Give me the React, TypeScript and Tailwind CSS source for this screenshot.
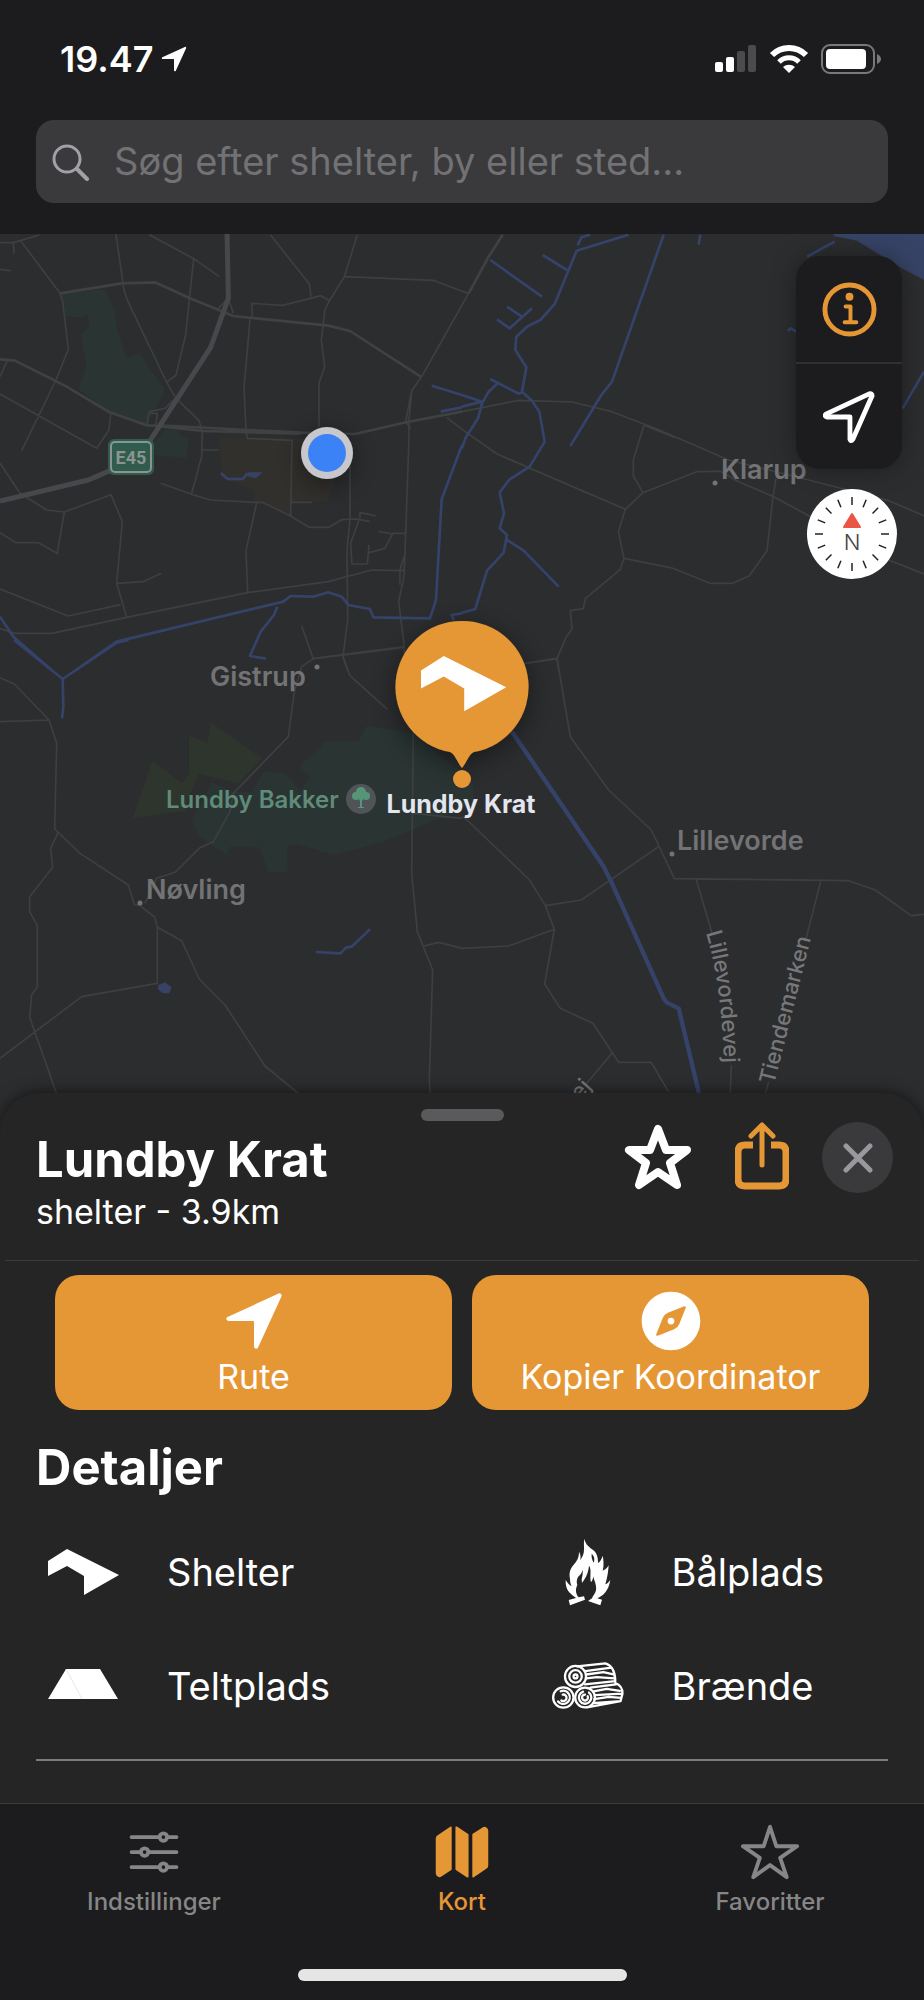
import { useState } from "react";
import {
  IoCompass,
  IoMap,
  IoNavigate,
  IoOptionsOutline,
  IoStarOutline,
} from "react-icons/io5";

// Map geometry is stored per tile, in tile units (3 units = 1 map pixel).
type Tile = {
  x: number;
  y: number;
  parks?: string;
  woods?: string;
  campus?: string;
  lakes?: string;
  roads: string;
  mainRoads?: string;
  motorway?: string;
  streams: string;
  canal?: string;
};

const tiles: Tile[] = [
  {
    x: 0,
    y: -4,
    parks:
      "M183 190L315 177L343 240L352 300L380 385L418 370L495 480L440 585L325 545L235 478L260 410L243 315L268 288L262 252L250 262L197 260Z M495 600L535 600L538 615L567 628L558 685L465 675L460 640Z",
    campus:
      "M660 625H876L920 628L1010 745L980 817H872L870 857L790 818L763 815V780L663 745Z",
    lakes: "M735 735L745 727H787L768 745L742 738Z",
    motorway: "M681 0L685 205L632 352L450 632M330 722L265 750L0 813",
    mainRoads:
      "M0 388L45 392L200 470L325 545L440 586L520 588L740 600L905 608L1065 612L1222 576L1386 545M470 588L610 603L900 611M180 190L365 160L465 157L570 205L700 258L985 287L1050 303L1262 440",
    roads:
      "M0 38L40 38L118 15M40 38L42 70M62 32L180 190L188 215L205 358L168 450L65 662M0 118L32 122M346 0L372 180L384 215L500 457L528 505L597 572L607 605L605 680L575 790M448 14L581 86L658 140M581 86L557 315L528 435L500 457M655 235L685 205L700 250M811 14L928 162L933 200M1072 14L1033 140L988 213L975 238L964 330L974 410L957 460V590M1033 140L1300 151L1386 184M757 262L755 220L848 226L963 197L990 213M750 268L732 475L738 600L742 625L876 631L872 857M1386 225L1265 440L1235 482L1227 570V625L1217 910L1212 1040L1196 1115L1213 1250V1320M1235 482L1217 575L1232 595M1340 562L1386 598M0 440L22 392M145 440L200 470M0 492L290 655L327 600L332 548M440 586L448 545L495 535L525 505M450 550H472L468 582M607 660H658M482 760L575 793L632 810L790 818L870 857L928 892H987L1025 869L1070 867L1110 875M875 817H936M770 818L738 962L743 1085M0 700L60 790L140 840L193 846L333 794L367 875L350 1060L380 1162M193 846L172 968M0 908L47 938H115L175 972M350 1060L430 1055L484 1030M0 1077L205 1158L362 1124M0 1196L45 1210H155L380 1162L743 1088L985 1055L1115 1020L1212 1022M1050 680V870L1041 960L1043 1170L1029 1280L1042 1320M1078 867L1052 940L1056 1002H1102L1107 945M1107 968L1155 955L1177 912L1135 904M1177 910H1217M1080 865V847L1127 858M905 1187L940 1286L1213 1250M1212 980L1200 1020V1065",
    streams:
      "M0 1160L40 1220L155 1320M228 1320L350 1235L850 1115L872 1098L940 1100L985 1087L1025 1100L1045 1125L1110 1137L1120 1162L1290 1165L1308 1110L1325 808L1386 645M832 1130L822 1155L782 1205L750 1278L798 1286M1295 467L1386 495M1322 545L1386 532M663 729L683 747H728L742 730M1386 1150L1355 1155L1362 1170",
  },
  {
    x: 462,
    y: -4,
    lakes: "M1115 0H1386V150L1320 115L1185 32L1115 18Z",
    mainRoads: "M122 14L80 80L20 190",
    roads:
      "M20 190L0 225M0 184L20 190M0 545L170 511L330 516L450 545L585 597L800 690L1040 750L1280 812L1386 857M545 585L640 623M0 598L105 672L490 838M545 588L514 690V738L543 788L490 838L469 905L486 985L475 1018L370 1106L364 1136L325 1142L330 1198L312 1222L285 1286L290 1320M285 1286L190 1300M543 788L704 725L775 724L830 755L935 800L1040 857L1280 990L1386 1032M942 745L933 800L915 962L862 1037L812 1060H745L630 1014L486 985",
    streams:
      "M385 14L358 22L347 46M500 14L344 62L278 222L235 270L195 290L163 320L160 360L193 412L180 485L210 512L232 545L248 635L203 710L143 748L113 787L126 850L113 895L135 915L125 968L75 1022L40 1137L0 1148M85 447L168 490L180 488M105 462L80 485L60 520L48 565L10 625L0 655M0 495L60 515L0 530M135 930L185 962L290 1070M605 14L450 455L418 495L325 648M715 14L710 44M242 75L315 120M85 90L240 200M135 230L180 260M105 268L143 295L210 235M1035 80L1118 35M978 302L986 295L1003 305M1386 425L1322 535",
  },
  {
    x: 0,
    y: 406,
    parks:
      "M897 380L978 304L1075 303L1100 257L1240 280L1386 400L1420 430V490L1240 568L1150 605L1005 645L890 612L862 618V695L805 698L778 622L693 618L680 645L600 592L573 540L605 490L632 425L700 455L755 455L790 395L855 400L900 450L932 410Z",
    woods:
      "M632 247L787 355L715 430L595 402L565 480L560 512L398 535L458 362L547 430L567 400V288L622 308Z",
    lakes: "M475 1035L495 1027L515 1042L508 1060H488L474 1048Z",
    roads:
      "M0 113L43 132L147 240L170 310L164 567L240 640L385 735L403 793L420 797L465 832L472 862L545 902L598 1017L675 1095L795 1278L890 1356L950 1400M0 245L147 240M174 578L152 625L158 682L89 770V815L112 857V1040L95 1065L89 1132L168 1356L185 1400M472 862V1030L245 1070L0 1255M435 790L470 715L525 697L600 623L640 605L690 515L700 460L865 290L883 155L905 80L940 56L1213 22M1029 50L1050 107L1162 208M1240 280L1235 700L1252 875L1298 990L1288 1320L1292 1400M1272 918L1316 907L1386 925M1240 520L1386 535",
    streams:
      "M42 0L188 117L350 8L385 0M188 117L190 200L186 235M947 936L1022 940L1038 923L1055 920L1110 868",
  },
  {
    x: 462,
    y: 406,
    roads:
      "M190 70L285 55M285 55L325 290L440 450L568 570L637 716L1160 722L1240 750L1348 827L1386 823M590 620L358 780L250 797M0 530L15 540L203 720L250 797L277 868L248 1032L295 1105L393 1150L470 1267H568L620 1356M450 1240L370 1335M0 925L140 918L277 868M702 716L750 880M808 1275L803 1400M1076 724L1030 905M920 1325L900 1400",
    streams: "",
    canal: "M150 275L425 680L450 730L605 1075L615 1088L650 1105L710 1356L720 1400",
  },
];

const towns = [
  { name: "Klarup", x: 721, y: 245, dotX: 715, dotY: 249 },
  { name: "Gistrup", x: 210, y: 452, dotX: 317, dotY: 433 },
  { name: "Lillevorde", x: 677, y: 616, dotX: 672, dotY: 620 },
  { name: "Nøvling", x: 146, y: 665, dotX: 140, dotY: 669 },
];

const compassTicks = Array.from({ length: 16 }, (_, i) => i * 22.5);

const SHELTER_PATH = "M0 12L19 0L71 26L36 46V27L19 17L0 27Z";

const MapView = () => (
  <svg
    className="absolute inset-0 w-full h-full"
    viewBox="0 0 924 940"
    preserveAspectRatio="xMidYMin slice"
    role="img"
    aria-label="Kort over Lundby Krat"
  >
    <defs>
      <filter id="soft" x="-50%" y="-50%" width="200%" height="200%">
        <feDropShadow dx="0" dy="6" stdDeviation="14" floodOpacity="0.45" />
      </filter>
    </defs>
    {tiles.map((tile) => (
      <g
        key={`${tile.x}-${tile.y}`}
        transform={`translate(${tile.x} ${tile.y}) scale(0.33333)`}
        fill="none"
        strokeLinejoin="round"
      >
        <path d={tile.campus} fill="#32302d" />
        <path d={tile.woods} fill="#2d352d" />
        <path d={tile.parks} fill="#293433" />
        <path d={tile.lakes} fill="#374366" />
        <path d={tile.roads} stroke="#3e3f41" strokeWidth="5" />
        <path d={tile.mainRoads} stroke="#404143" strokeWidth="8" />
        <path d={tile.motorway} stroke="#47484b" strokeWidth="15" />
        <path d={tile.streams} stroke="#35436a" strokeWidth="8" />
        <path d={tile.canal} stroke="#35436a" strokeWidth="13" />
      </g>
    ))}

    <g fill="#737376" fontSize="27" fontWeight="600">
      {towns.map((town) => (
        <g key={town.name}>
          <circle cx={town.dotX} cy={town.dotY} r="2.5" />
          <text x={town.x} y={town.y}>
            {town.name}
          </text>
        </g>
      ))}
    </g>

    <path id="lillevordevej" d="M706 699Q723 755 724 840" fill="none" />
    <path id="tiendemarken" d="M774 851L812 700" fill="none" />
    <g fill="#77777a" fontSize="22" fontWeight="500">
      <text>
        <textPath href="#lillevordevej">Lillevordevej</textPath>
      </text>
      <text>
        <textPath href="#tiendemarken">Tiendemarken</textPath>
      </text>
      <text transform="translate(580 867) rotate(-48)">ej</text>
    </g>

    <g>
      <rect x="108" y="205" width="46" height="36" rx="6" fill="#2f5c4d" />
      <rect
        x="111"
        y="208"
        width="40"
        height="30"
        rx="4"
        fill="none"
        stroke="#8c9491"
        strokeWidth="2"
      />
      <text
        x="131"
        y="230"
        textAnchor="middle"
        fontSize="18"
        fontWeight="700"
        className="font-['Roboto','Liberation_Sans',sans-serif]"
        fill="#8c9491"
      >
        E45
      </text>
    </g>

    <text x="166" y="574" fontSize="24" fontWeight="600" fill="#5f8b79">
      Lundby Bakker
    </text>
    <circle cx="361" cy="565" r="15" fill="#505456" />
    <g fill="#579579">
      <circle cx="361" cy="558" r="5" />
      <circle cx="356" cy="562" r="4" />
      <circle cx="366" cy="562" r="4" />
      <path d="M357 562H365L362 567V573H364V574H358V573H360V567Z" />
    </g>

    <circle cx="327" cy="219" r="26" fill="#c7c7cc" filter="url(#soft)" />
    <circle cx="327" cy="219" r="19" fill="#3b82f6" />

    <path
      d="M462 387A66 66 0 0 1 474 518C469 520 467 528 462 534C457 528 455 520 450 518A66 66 0 0 1 462 387Z"
      fill="#e69735"
      filter="url(#soft)"
    />
    <circle cx="462" cy="545" r="9" fill="#e69735" />
    <path
      transform="translate(421 422) scale(1.2)"
      d={SHELTER_PATH}
      fill="#fff"
    />
    <text
      x="461"
      y="579"
      textAnchor="middle"
      fontSize="25"
      fontWeight="700"
      fill="#e3e6ee"
    >
      Lundby Krat
    </text>
  </svg>
);

const StatusBar = () => (
  <div className="flex items-center justify-between pl-[60px] pr-[43px]">
    <div className="flex items-center gap-1.5 text-[36px] leading-[44px] font-semibold">
      <time>19.47</time>
      <IoNavigate size={30} />
    </div>
    <div className="flex items-center gap-3">
      <svg width="42" height="28" viewBox="0 0 42 28" fill="#fff">
        <rect x="0" y="17" width="8" height="10" rx="2" />
        <rect x="11" y="12" width="8" height="15" rx="2" />
        <rect x="22" y="6" width="8" height="21" rx="2" fill="#4b4b4d" />
        <rect x="33" y="0" width="8" height="27" rx="2" fill="#4b4b4d" />
      </svg>
      <svg width="40" height="30" viewBox="0 0 40 30" fill="none">
        <path d="M3 11A24 24 0 0 1 37 11" stroke="#fff" strokeWidth="6" />
        <path d="M10 18A14 14 0 0 1 30 18" stroke="#fff" strokeWidth="5" />
        <path d="M20 29L14 23A9 9 0 0 1 26 23Z" fill="#fff" />
      </svg>
      <svg width="60" height="30" viewBox="0 0 60 30" fill="none">
        <rect
          x="1"
          y="1"
          width="52"
          height="28"
          rx="8"
          stroke="#79797b"
          strokeWidth="2"
        />
        <rect x="5" y="5" width="40" height="20" rx="4" fill="#fff" />
        <path d="M56 10Q60 12 60 15T56 20Z" fill="#79797b" />
      </svg>
    </div>
  </div>
);

const SearchBar = () => (
  <label className="flex items-center mx-9 h-[83px] gap-6 rounded-[18px] bg-[#3a3a3c] pl-4 pr-6">
    <svg width="38" height="38" viewBox="0 0 38 38" fill="none">
      <circle cx="15" cy="16" r="13" stroke="#a1a1a8" strokeWidth="3" />
      <path
        d="M25 26L35 36"
        stroke="#a1a1a8"
        strokeWidth="4"
        strokeLinecap="round"
      />
    </svg>
    <input
      type="search"
      aria-label="Søg"
      placeholder="Søg efter shelter, by eller sted..."
      className="flex-1 min-w-0 bg-transparent text-[38px] text-white placeholder:text-[#727275] outline-none"
    />
  </label>
);

const MapControls = () => (
  <div className="absolute right-[22px] top-[22px] flex flex-col items-end gap-5">
    <div className="w-[106px] rounded-3xl bg-[#1c1c1e] shadow-[0_0_24px_rgba(0,0,0,0.35)] divide-y-2 divide-[#303032]">
      <button
        aria-label="Information"
        className="flex items-center justify-center w-full h-[108px]"
      >
        <svg width="55" height="55" viewBox="0 0 56 56" fill="none">
          <circle cx="28" cy="28" r="25" stroke="#e69735" strokeWidth="5" />
          <circle cx="28" cy="15" r="4" fill="#e69735" />
          <path
            d="M24 25H29V41M23 41H35"
            stroke="#e69735"
            strokeWidth="4"
            strokeLinecap="round"
            strokeLinejoin="round"
          />
        </svg>
      </button>
      <button
        aria-label="Min placering"
        className="flex items-center justify-center w-full h-[105px]"
      >
        <svg width="52" height="52" viewBox="0 0 54 54" fill="none">
          <path
            d="M3 24Q1 26 4 27H28V50Q29 53 31 50L51 5Q51 2 48 3Z"
            stroke="#fff"
            strokeWidth="5"
            strokeLinejoin="round"
          />
        </svg>
      </button>
    </div>
    <svg
      className="mr-[5px]"
      width="90"
      height="90"
      viewBox="0 0 90 90"
      role="img"
      aria-label="Kompas"
    >
      <circle cx="45" cy="45" r="45" fill="#fff" />
      {compassTicks.map((angle) => (
        <path
          key={angle}
          d="M45 8V16"
          stroke="#222"
          strokeWidth="1.5"
          transform={`rotate(${angle} 45 45)`}
        />
      ))}
      <path
        d="M45 25L53 38H37Z"
        fill="#eb5545"
        stroke="#eb5545"
        strokeWidth="2"
        strokeLinejoin="round"
      />
      <text
        x="45"
        y="61"
        textAnchor="middle"
        fontSize="22"
        fontWeight="300"
        fill="#444"
      >
        N
      </text>
    </svg>
  </div>
);

const ShelterIcon = () => (
  <svg width="71" height="46" viewBox="0 0 71 46" fill="#fff">
    <path d={SHELTER_PATH} />
  </svg>
);

const TentIcon = () => (
  <svg width="70" height="34" viewBox="0 0 70 34">
    <path d="M18 0H52L70 30H0Z" fill="#fff" />
    <path d="M18 0L34 30" stroke="#e6e6e6" strokeWidth="1" />
  </svg>
);

const FireIcon = () => (
  <svg width="46" height="68" viewBox="77 55 138 204" fill="#fff">
    <path
      fillRule="evenodd"
      d="M135 57C132 75 136 85 133 100C130 112 124 118 122 122C126 110 122 102 119 96C119 115 112 125 103 135C93 147 88 158 92 178C92 190 95 195 97 200C90 196 84 190 79 181C78 200 84 212 92 220C100 228 105 231 110 235L88 241L92 257L137 240L134 230L118 233C108 222 108 208 114 196C111 188 112 180 116 172C122 166 128 160 130 150C131 165 128 172 127 180L128 190C134 180 146 168 149 138C158 150 150 170 155 188C160 182 162 176 161 170C168 190 172 200 170 212C168 222 160 230 158 236L146 244L183 257L188 240L174 236C190 228 208 215 213 180C208 188 204 192 198 194C202 180 206 165 208 137C203 147 197 150 190 153C194 138 193 122 190 108C186 120 182 126 176 130C176 110 172 98 160 90C146 80 138 72 135 57ZM157 102C163 108 168 116 163 129C158 120 156 112 157 102Z"
    />
  </svg>
);

const FirewoodIcon = () => (
  <svg
    width="72"
    height="48"
    viewBox="34 424 218 146"
    fill="none"
    stroke="#fff"
    strokeWidth="7"
    strokeLinecap="round"
    strokeLinejoin="round"
  >
    <path d="M110 437L196 428Q224 436 226 480M134 492L226 482M134 452L214 441M138 462L190 455L220 462M138 474L170 470L224 474" />
    <path d="M226 488Q248 496 248 520L242 543L140 562M150 502L228 492M160 513L200 506L240 512M164 525L246 520M162 537L206 530L244 533M158 549L242 543" />
    <circle cx="105" cy="468" r="32" />
    <circle cx="105" cy="468" r="19" />
    <circle cx="105" cy="468" r="6" />
    <circle cx="68" cy="532" r="31" />
    <path d="M60 513A20 20 0 1 1 52 544M66 523A10 10 0 1 1 62 541" />
    <circle cx="134" cy="532" r="30" />
    <path d="M146 517A19 19 0 1 1 128 514M142 528A9 9 0 1 1 134 523" />
  </svg>
);

const details = [
  { label: "Shelter", icon: <ShelterIcon /> },
  { label: "Bålplads", icon: <FireIcon /> },
  { label: "Teltplads", icon: <TentIcon /> },
  { label: "Brænde", icon: <FirewoodIcon /> },
];

const actions = [
  { label: "Rute", icon: <IoNavigate size={68} /> },
  { label: "Kopier Koordinator", icon: <IoCompass size={72} /> },
];

const PlaceSheet = () => (
  <section className="relative -mt-10 rounded-t-[40px] bg-[#252525] shadow-[0_0_16px_rgba(0,0,0,0.6)] pt-4 pb-[42px]">
    <div className="mx-auto w-[83px] h-3 rounded-md bg-[#5a5a5c]" />
    <div className="flex justify-between pl-9 pr-[31px] pb-7">
      <div className="pt-[11px]">
        <h1 className="text-[49px] leading-[56px] font-bold">Lundby Krat</h1>
        <p className="mt-1 text-[34px] leading-10">shelter - 3.9km</p>
      </div>
      <div className="flex items-start pt-px">
        <button aria-label="Tilføj til favoritter" className="mr-[43px]">
          <svg width="68" height="71" viewBox="0 0 68 71" fill="none">
            <path
              d="M34 7L42 28H63L46 41L53 63L34 50L15 63L22 41L5 28H26Z"
              stroke="#fff"
              strokeWidth="8"
              strokeLinejoin="round"
            />
          </svg>
        </button>
        <button aria-label="Del" className="mr-[33px]">
          <svg width="54" height="71" viewBox="0 0 54 71" fill="none">
            <path
              d="M18 23H10Q3 23 3 30V57Q3 64 10 64H44Q51 64 51 57V30Q51 23 44 23H36"
              stroke="#e69735"
              strokeWidth="7"
            />
            <path
              d="M27 43V4M16 14L27 3L38 14"
              stroke="#e69735"
              strokeWidth="5"
              strokeLinecap="round"
              strokeLinejoin="round"
            />
          </svg>
        </button>
        <button
          aria-label="Luk"
          className="flex items-center justify-center size-[71px] rounded-full bg-[#3a3a3c]"
        >
          <svg width="30" height="30" viewBox="0 0 30 30" fill="none">
            <path
              d="M3 3L27 27M27 3L3 27"
              stroke="#98989e"
              strokeWidth="5"
              strokeLinecap="round"
            />
          </svg>
        </button>
      </div>
    </div>
    <hr className="mx-[5px] border-[#3a3a3b]" />

    <div className="grid grid-cols-2 gap-5 px-[55px] pt-[14px]">
      {actions.map((action) => (
        <button
          key={action.label}
          className="flex flex-col items-center h-[135px] pt-[10px] rounded-3xl bg-[#e69735] text-[34px] leading-10"
        >
          <span className="flex items-center justify-center h-[72px]">
            {action.icon}
          </span>
          {action.label}
        </button>
      ))}
    </div>

    <h2 className="mt-[30px] px-9 text-[49px] leading-[56px] font-bold">
      Detaljer
    </h2>
    <ul className="mt-9 grid grid-cols-[3fr_2fr] gap-y-[34px] pl-[47px] pr-9">
      {details.map((detail) => (
        <li key={detail.label} className="flex items-center gap-12 h-20">
          <span className="flex justify-center w-[72px]">{detail.icon}</span>
          <span className="text-[38px] leading-[48px]">{detail.label}</span>
        </li>
      ))}
    </ul>
    <hr className="mx-9 mt-[33px] border-t-2 border-[#7c7c7c]" />
  </section>
);

const tabs = [
  { name: "Indstillinger", icon: <IoOptionsOutline size={60} /> },
  { name: "Kort", icon: <IoMap size={60} /> },
  { name: "Favoritter", icon: <IoStarOutline size={62} /> },
];

const TabBar = () => {
  const [active, setActive] = useState("Kort");

  return (
    <nav className="relative border-t border-[#3a3a38] bg-[#1c1c1e] pt-4 pb-[19px]">
      <div className="grid grid-cols-3">
        {tabs.map((tab) => (
          <button
            key={tab.name}
            onClick={() => setActive(tab.name)}
            className={`flex flex-col items-center gap-1 text-[24px] leading-7 font-medium ${
              active === tab.name ? "text-[#e69735]" : "text-[#868686]"
            }`}
          >
            <span className="flex items-center justify-center h-16">
              {tab.icon}
            </span>
            {tab.name}
          </button>
        ))}
      </div>
      <div className="mx-auto mt-[53px] w-[329px] h-3 rounded-md bg-[#e5e5e5]" />
    </nav>
  );
};

const App: React.FC = () => {
  return (
    <div className="flex flex-col min-h-screen bg-[#1c1c1e] text-white font-['Inter','Liberation_Sans',sans-serif]">
      <header className="pt-[37px] pb-[31px]">
        <StatusBar />
        <div className="mt-[39px]">
          <SearchBar />
        </div>
      </header>
      <main className="flex flex-col flex-1">
        <div className="relative flex-1 min-h-[600px] overflow-hidden bg-[#2c2d2f]">
          <MapView />
          <MapControls />
        </div>
        <PlaceSheet />
      </main>
      <TabBar />
    </div>
  );
};

export default App;
